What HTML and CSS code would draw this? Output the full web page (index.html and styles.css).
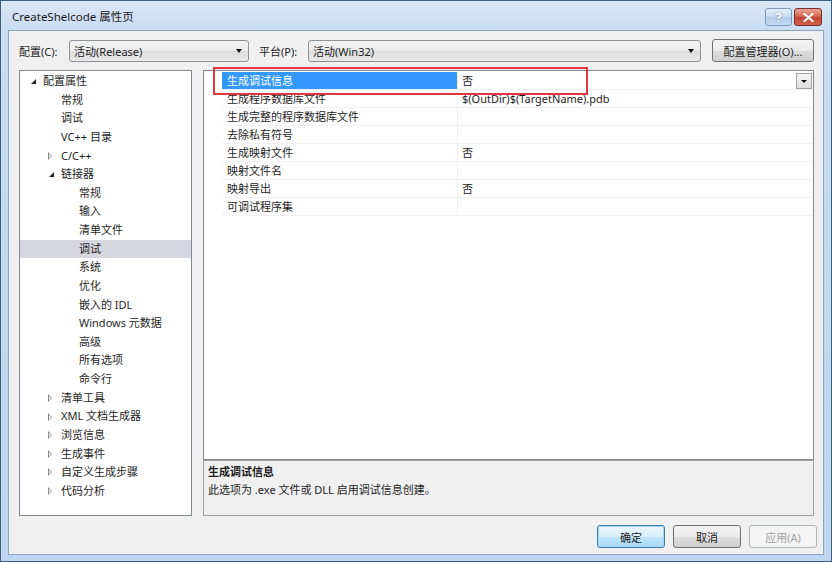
FILE: index.html
```html
<!DOCTYPE html>
<html lang="zh-CN">
<head>
<meta charset="utf-8">
<title>CreateShelcode 属性页</title>
<link rel="stylesheet" href="styles.css">
</head>
<body>
<div class="window">
  <div class="titlebar">
    <span class="title">CreateShelcode 属性页</span>
    <div class="caption-btns">
      <span class="cap-btn help">?</span>
      <span class="cap-btn close"><svg width="11" height="9" viewBox="0 0 11 9"><path d="M1.5 1 L9.5 8 M9.5 1 L1.5 8" stroke="#fff" stroke-width="2.2" stroke-linecap="round"/></svg></span>
    </div>
  </div>
  <div class="client">
    <div class="toolbar">
      <span class="label">配置(C):</span>
      <div class="combo combo-config"><span>活动(Release)</span><span class="arrow"></span></div>
      <span class="label label-platform">平台(P):</span>
      <div class="combo combo-platform"><span>活动(Win32)</span><span class="arrow"></span></div>
      <button class="btn btn-manager">配置管理器(O)...</button>
    </div>
    <div class="main">
      <div class="tree">
        <div class="node l0"><span class="tw open"></span>配置属性</div>
        <div class="node l1"><span class="tw"></span>常规</div>
        <div class="node l1"><span class="tw"></span>调试</div>
        <div class="node l1"><span class="tw"></span>VC++ 目录</div>
        <div class="node l1"><span class="tw closed"></span>C/C++</div>
        <div class="node l1"><span class="tw open"></span>链接器</div>
        <div class="node l2"><span class="tw"></span>常规</div>
        <div class="node l2"><span class="tw"></span>输入</div>
        <div class="node l2"><span class="tw"></span>清单文件</div>
        <div class="node l2 selected"><span class="tw"></span>调试</div>
        <div class="node l2"><span class="tw"></span>系统</div>
        <div class="node l2"><span class="tw"></span>优化</div>
        <div class="node l2"><span class="tw"></span>嵌入的 IDL</div>
        <div class="node l2"><span class="tw"></span>Windows 元数据</div>
        <div class="node l2"><span class="tw"></span>高级</div>
        <div class="node l2"><span class="tw"></span>所有选项</div>
        <div class="node l2"><span class="tw"></span>命令行</div>
        <div class="node l1"><span class="tw closed"></span>清单工具</div>
        <div class="node l1"><span class="tw closed"></span>XML 文档生成器</div>
        <div class="node l1"><span class="tw closed"></span>浏览信息</div>
        <div class="node l1"><span class="tw closed"></span>生成事件</div>
        <div class="node l1"><span class="tw closed"></span>自定义生成步骤</div>
        <div class="node l1"><span class="tw closed"></span>代码分析</div>
      </div>
      <div class="right">
        <div class="grid">
          <div class="row active"><span class="name">生成调试信息</span><span class="value">否<span class="dd"></span></span></div>
          <div class="row"><span class="name">生成程序数据库文件</span><span class="value">$(OutDir)$(TargetName).pdb</span></div>
          <div class="row"><span class="name">生成完整的程序数据库文件</span><span class="value"></span></div>
          <div class="row"><span class="name">去除私有符号</span><span class="value"></span></div>
          <div class="row"><span class="name">生成映射文件</span><span class="value">否</span></div>
          <div class="row"><span class="name">映射文件名</span><span class="value"></span></div>
          <div class="row"><span class="name">映射导出</span><span class="value">否</span></div>
          <div class="row"><span class="name">可调试程序集</span><span class="value"></span></div>
        </div>
        <div class="desc">
          <div class="desc-title">生成调试信息</div>
          <div class="desc-text">此选项为 .exe 文件或 DLL 启用调试信息创建。</div>
        </div>
      </div>
    </div>
    <div class="buttons">
      <button class="btn btn-ok">确定</button>
      <button class="btn">取消</button>
      <button class="btn disabled">应用(A)</button>
    </div>
  </div>
  <div class="highlight-box"></div>
</div>
</body>
</html>
```

FILE: styles.css
```css
* { box-sizing: border-box; }

html, body {
  margin: 0;
  padding: 0;
  background: #ffffff;
}

body {
  font-family: "Noto Sans", "Noto Sans CJK SC", sans-serif;
  font-size: 11px;
  color: #1e1e1e;
}

.window {
  position: relative;
  width: 832px;
  height: 562px;
  border: 1px solid #3f5f80;
  background: linear-gradient(to bottom, #dbe8f6 0px, #c9dcf1 30px, #bfd4ee 100%);
  padding: 0 7px 6px 7px;
  display: flex;
  flex-direction: column;
}

.titlebar {
  height: 29px;
  display: flex;
  align-items: center;
  justify-content: space-between;
  padding-left: 4px;
  padding-right: 2px;
}

.title {
  font-size: 11.5px;
  color: #1a1a1a;
}

.caption-btns {
  display: flex;
  gap: 2px;
  align-self: flex-start;
  margin-top: 7px;
}

.cap-btn {
  height: 18px;
  border-radius: 3px;
  display: flex;
  align-items: center;
  justify-content: center;
}

.cap-btn.help {
  width: 27px;
  border: 1px solid #7d98b8;
  background: linear-gradient(to bottom, #e4eefa 0%, #c6d9ef 50%, #b2cbe8 51%, #c5daf2 100%);
  color: #ffffff;
  font-weight: bold;
  font-size: 12px;
  text-shadow: 0 0 2px #506e90;
}

.cap-btn.close {
  width: 28px;
  border: 1px solid #7a2c26;
  background: linear-gradient(to bottom, #e9a395 0%, #d56a58 45%, #c2412e 55%, #d2644b 100%);
}

.client {
  flex: 1;
  background: #f0f0f0;
  border: 1px solid #8ba3c2;
  display: flex;
  flex-direction: column;
  padding: 0 8px 0 10px;
}

.toolbar {
  margin-top: 8px;
  height: 23px;
  display: flex;
  align-items: center;
}

.label {
  width: 50px;
}

.label-platform {
  margin-left: 10px;
  width: 49px;
}

.combo {
  height: 22px;
  border: 1px solid #8f9195;
  border-radius: 3px;
  background: linear-gradient(to bottom, #f3f3f3 0%, #ebebeb 50%, #dddddd 51%, #e9e9e9 100%);
  display: flex;
  align-items: center;
  justify-content: space-between;
  padding: 0 6px 0 4px;
}

.combo-config { width: 180px; }
.combo-platform { width: 393px; }

.arrow {
  width: 0;
  height: 0;
  border-left: 3.5px solid transparent;
  border-right: 3.5px solid transparent;
  border-top: 4px solid #111;
}

.btn {
  font-family: inherit;
  font-size: 11px;
  color: #1e1e1e;
  height: 23px;
  border: 1px solid #707070;
  border-radius: 3px;
  background: linear-gradient(to bottom, #f3f3f3 0%, #ebebeb 50%, #dddddd 51%, #cfcfcf 100%);
  padding: 0;
}

.btn-manager {
  margin-left: 11px;
  width: 102px;
}

.main {
  margin-top: 8px;
  display: flex;
  gap: 11px;
  height: 446px;
}

.tree {
  width: 173px;
  border: 1px solid #828790;
  background: #ffffff;
  padding-top: 1px;
}

.node {
  height: 18.64px;
  line-height: 18.64px;
  display: flex;
  align-items: center;
  white-space: nowrap;
  color: #1e1e1e;
}

.node.l0 { padding-left: 5px; }
.node.l1 { padding-left: 23px; }
.node.l2 { padding-left: 41px; }

.node.selected {
  background: #d6d6df;
}

.tw {
  width: 18px;
  height: 18px;
  flex: none;
  position: relative;
}

.tw.open::before {
  content: "";
  position: absolute;
  left: 6px;
  top: 7px;
  width: 0;
  height: 0;
  border-left: 5px solid transparent;
  border-bottom: 5px solid #262626;
}

.tw.closed::before {
  content: "";
  position: absolute;
  left: 5px;
  top: 5px;
  width: 0;
  height: 0;
  border-top: 4px solid transparent;
  border-bottom: 4px solid transparent;
  border-left: 4px solid #8a8a8a;
}

.tw.closed::after {
  content: "";
  position: absolute;
  left: 6px;
  top: 7px;
  width: 0;
  height: 0;
  border-top: 2px solid transparent;
  border-bottom: 2px solid transparent;
  border-left: 2px solid #ffffff;
}

.right {
  flex: 1;
  display: flex;
  flex-direction: column;
  margin-right: 1px;
}

.grid {
  height: 390px;
  border: 1px solid #828790;
  background: #ffffff;
  padding: 1px 1px 0 18px;
}

.row {
  height: 18px;
  display: flex;
  border-bottom: 1px solid #f0f0f0;
}

.name {
  width: 236px;
  padding-left: 5px;
  line-height: 17px;
  border-right: 1px solid #f0f0f0;
  white-space: nowrap;
}

.value {
  flex: 1;
  padding-left: 4px;
  line-height: 17px;
  position: relative;
  white-space: nowrap;
}

.row.active .name {
  background: #3399ff;
  color: #ffffff;
}

.dd {
  position: absolute;
  right: 0;
  top: 1px;
  width: 16px;
  height: 16px;
  border: 1px solid #a0a0a0;
  background: linear-gradient(to bottom, #f6f6f6, #dedede);
}

.dd::after {
  content: "";
  position: absolute;
  left: 4px;
  top: 6px;
  border-left: 3px solid transparent;
  border-right: 3px solid transparent;
  border-top: 3px solid #111;
}

.desc {
  height: 56px;
  border: 1px solid #a0a0a0;
  background: #f0f0f0;
  padding: 2px 4px;
  line-height: 18px;
}

.desc-title {
  font-weight: bold;
}

.buttons {
  margin-top: 9px;
  display: flex;
  justify-content: flex-end;
  gap: 8px;
  margin-right: -2px;
}

.buttons .btn {
  width: 68px;
}

.btn-ok {
  border: 1px solid #3c7fb1;
  box-shadow: inset 0 0 0 1px #a6d7f4;
  background: linear-gradient(to bottom, #eaf6fd 0%, #d9f0fc 50%, #bee6fd 51%, #a7d9f5 100%);
}

.btn.disabled {
  color: #a0a0a0;
  border-color: #adb2b5;
  background: #f4f4f4;
}

.highlight-box {
  position: absolute;
  left: 212px;
  top: 66px;
  width: 375px;
  height: 28px;
  border: 2px solid #e3363c;
}
```
